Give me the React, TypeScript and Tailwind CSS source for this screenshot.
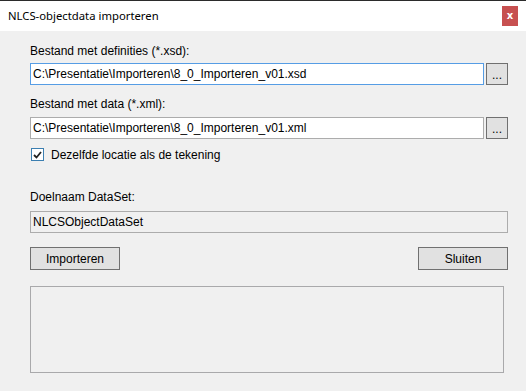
import React from "react";

function PathField({ value, focused }: { value: string; focused?: boolean }) {
  return (
    <div className="flex gap-[2px]">
      <div
        className={`flex-1 h-[22px] bg-white border flex items-center pl-[2px] ${
          focused ? "border-[#569de5]" : "border-[#acacac]"
        }`}
      >
        <span className="leading-[14px] whitespace-nowrap">{value}</span>
      </div>
      <button className="w-[22px] h-[22px] bg-[#e1e1e1] border border-[#707070] flex items-end justify-center pb-[4px] leading-[10px]">
        ...
      </button>
    </div>
  );
}

export default function App() {
  return (
    <div className="w-[526px] h-[391px] bg-[#f0f0f0] font-['Liberation_Sans',Arial,sans-serif] text-[12px] text-black overflow-hidden">
      {/* title bar */}
      <div className="h-[31px] bg-white border-t border-[#2b2b2b] flex items-center justify-between pl-[8px] pr-[8px]">
        <span className="font-['Noto_Sans',sans-serif] text-[11.3px] leading-[16px]">
          NLCS-objectdata importeren
        </span>
        <div className="w-[16px] h-[20px] bg-[#c75050] text-white flex items-center justify-center text-[10px] font-bold leading-none font-['DejaVu_Sans',sans-serif]">
          x
        </div>
      </div>

      <div className="pl-[30px] pr-[18px] pt-[13px] flex flex-col">
        <div className="leading-[14px] h-[14px]">Bestand met definities (*.xsd):</div>
        <div className="mt-[5px]">
          <PathField value="C:\Presentatie\Importeren\8_0_Importeren_v01.xsd" focused />
        </div>

        <div className="mt-[12px] leading-[14px] h-[14px]">Bestand met data (*.xml):</div>
        <div className="mt-[6px]">
          <PathField value="C:\Presentatie\Importeren\8_0_Importeren_v01.xml" />
        </div>

        <label className="mt-[9px] ml-[1px] flex items-start gap-[7px] h-[14px] leading-[14px]">
          <span className="w-[13px] h-[13px] bg-white border border-[#3c7fb1] flex items-center justify-center">
            <svg width="9" height="8" viewBox="0 0 9 8">
              <path d="M1 4 L3.5 6.5 L8 1" fill="none" stroke="#222" strokeWidth="1.8" />
            </svg>
          </span>
          <span>Dezelfde locatie als de tekening</span>
        </label>

        <div className="mt-[28px] leading-[14px] h-[14px]">Doelnaam DataSet:</div>
        <div className="mt-[7px] h-[22px] border border-[#acacac] flex items-center pl-[2px]">
          <span className="leading-[14px]">NLCSObjectDataSet</span>
        </div>

        <div className="mt-[14px] flex justify-between">
          <button className="w-[90px] h-[23px] bg-[#e1e1e1] border border-[#707070] leading-[14px]">
            Importeren
          </button>
          <button className="w-[90px] h-[23px] bg-[#e1e1e1] border border-[#707070] leading-[14px]">
            Sluiten
          </button>
        </div>

        <div className="mt-[16px] mr-[4px] h-[87px] border border-[#a9a9ab]" />
      </div>
    </div>
  );
}
